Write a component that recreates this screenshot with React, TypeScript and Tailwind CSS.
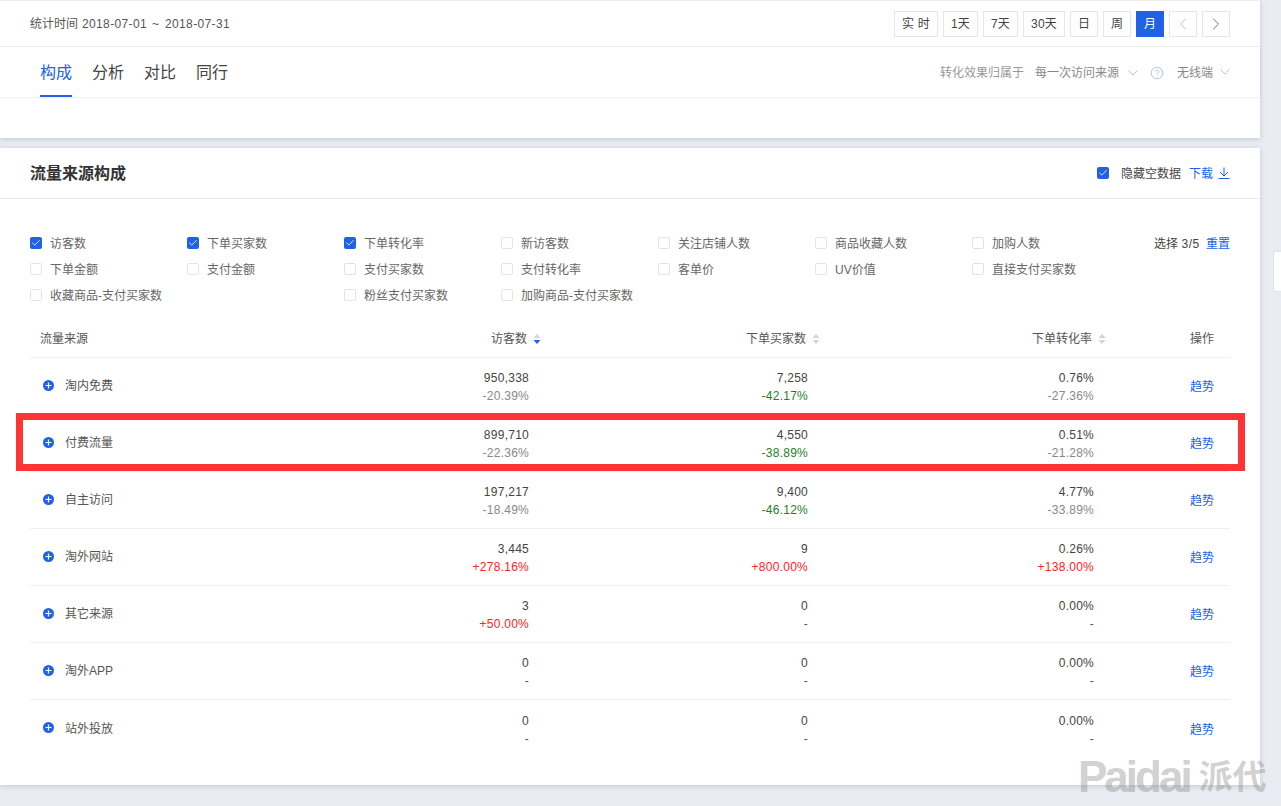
import { Check, ChevronLeft, ChevronRight, CircleHelp } from "lucide-react";

const ranges = [
  { label: "实 时", w: "w-[44px]" },
  { label: "1天", w: "w-[35px]" },
  { label: "7天", w: "w-[35px]" },
  { label: "30天", w: "w-[42px]" },
  { label: "日", w: "w-[28px]" },
  { label: "周", w: "w-[28px]" },
];

const metrics = [
  ["访客数", true],
  ["下单买家数", true],
  ["下单转化率", true],
  ["新访客数", false],
  ["关注店铺人数", false],
  ["商品收藏人数", false],
  ["加购人数", false],
  ["下单金额", false],
  ["支付金额", false],
  ["支付买家数", false],
  ["支付转化率", false],
  ["客单价", false],
  ["UV价值", false],
  ["直接支付买家数", false],
  ["收藏商品-支付买家数", false],
  null,
  ["粉丝支付买家数", false],
  ["加购商品-支付买家数", false],
] as const;

type Cell = [string, string];

const rows: { name: string; cells: Cell[] }[] = [
  { name: "淘内免费", cells: [["950,338", "-20.39%"], ["7,258", "-42.17%"], ["0.76%", "-27.36%"]] },
  { name: "付费流量", cells: [["899,710", "-22.36%"], ["4,550", "-38.89%"], ["0.51%", "-21.28%"]] },
  { name: "自主访问", cells: [["197,217", "-18.49%"], ["9,400", "-46.12%"], ["4.77%", "-33.89%"]] },
  { name: "淘外网站", cells: [["3,445", "+278.16%"], ["9", "+800.00%"], ["0.26%", "+138.00%"]] },
  { name: "其它来源", cells: [["3", "+50.00%"], ["0", "-"], ["0.00%", "-"]] },
  { name: "淘外APP", cells: [["0", "-"], ["0", "-"], ["0.00%", "-"]] },
  { name: "站外投放", cells: [["0", "-"], ["0", "-"], ["0.00%", "-"]] },
];

function deltaColor(value: string, col: number) {
  if (value.startsWith("+")) return "text-[#ff2222]";
  if (value === "-") return "text-[#555]";
  return col === 1 ? "text-[#1d7f2a]" : "text-[#888]";
}

function Checkbox({ checked }: { checked: boolean }) {
  return checked ? (
    <span className="grid h-3 w-3 shrink-0 place-items-center rounded-[2px] bg-[#2062e6] text-white">
      <Check className="h-[10px] w-[10px]" strokeWidth={2} />
    </span>
  ) : (
    <span className="h-3 w-3 shrink-0 rounded-[2px] border border-[#e4e4e4] bg-white" />
  );
}

function SortIcon({ active }: { active?: boolean }) {
  return (
    <svg width="8" height="12" viewBox="0 0 8 12" className="ml-[6px] -mr-3 shrink-0">
      <path d="M4 1 L7.5 5 H0.5 Z" fill="#ccd6e4" />
      <path d="M4 11 L7.5 7 H0.5 Z" fill={active ? "#2062e6" : "#ccd6e4"} />
    </svg>
  );
}

function PlusDot() {
  return (
    <svg width="11" height="11" viewBox="0 0 11 11" className="mb-[2px] shrink-0">
      <circle cx="5.5" cy="5.5" r="5.5" fill="#2062e6" />
      <path d="M2.5 5.5 H8.5 M5.5 2.5 V8.5" stroke="#fff" strokeWidth="1.2" />
    </svg>
  );
}

function Caret({ className }: { className: string }) {
  return (
    <svg width="10" height="6" viewBox="0 0 10 6" fill="none" stroke="#c4c4c4" className={className}>
      <path d="M0.5 0.5 L5 5 L9.5 0.5" />
    </svg>
  );
}

export default function App() {
  return (
    <div className="relative h-[806px] w-[1281px] overflow-hidden bg-[#e9ecf2] text-[12px] leading-[18px] text-[#444] [font-family:'Liberation_Sans','Noto_Sans_CJK_SC',sans-serif]">
      <div className="w-[1260px] bg-white shadow-[0_1px_5px_rgba(60,70,90,0.22)]">
        <div className="flex h-[47px] items-center justify-between border-t border-b border-t-[#eeeeee] border-b-[#ececec] pl-[30px] pr-[30px]">
          <span className="flex gap-[5px] text-[#555]">
            <span className="mr-[-1px]">统计时间</span>
            <span className="tracking-[0.36px]">2018-07-01</span>
            <span>~</span>
            <span className="ml-[1px] tracking-[0.36px]">2018-07-31</span>
          </span>
          <div className="flex gap-[5px]">
            {ranges.map((r) => (
              <span key={r.label} className={`grid h-[26px] place-items-center border border-[#e6e6e6] tracking-[0.2px] ${r.w}`}>
                {r.label}
              </span>
            ))}
            <span className="grid h-[26px] w-[28px] place-items-center bg-[#2062e6] text-white">月</span>
            <span className="grid h-[26px] w-[28px] place-items-center border border-[#e6e6e6] text-[#bbb]">
              <ChevronLeft className="h-5 w-5" strokeWidth={1.1} />
            </span>
            <span className="grid h-[26px] w-[28px] place-items-center border border-[#e6e6e6] text-[#666]">
              <ChevronRight className="h-5 w-5" strokeWidth={1.1} />
            </span>
          </div>
        </div>
        <div className="flex h-[50px] items-start justify-between pl-[40px] pr-[30px] shadow-[0_1px_2px_rgba(0,0,0,0.07)]">
          <div className="flex gap-5 text-[16px] leading-[24px]">
            <span className="h-[50px] border-b-2 border-[#2062e6] pt-[14px] text-[#2062e6]">构成</span>
            <span className="pt-[14px]">分析</span>
            <span className="pt-[14px]">对比</span>
            <span className="pt-[14px]">同行</span>
          </div>
          <div className="flex items-center pt-[17px] text-[#999]">
            <span>转化效果归属于</span>
            <span className="ml-[11px] text-[#888]">每一次访问来源</span>
            <Caret className="ml-[9px]" />
            <CircleHelp className="ml-[12px] h-[14px] w-[14px] text-[#b4c5db]" strokeWidth={1.7} />
            <span className="ml-[13px] text-[#888]">无线端</span>
            <Caret className="ml-[7px] -translate-y-px" />
          </div>
        </div>
        <div className="h-[41px]" />
      </div>

      <div className="mt-[10px] h-[637px] w-[1260px] bg-white shadow-[0_1px_5px_rgba(60,70,90,0.22)]">
        <div className="flex h-[51px] items-center justify-between border-b border-[#e8e8e8] px-[30px]">
          <h2 className="pt-[1px] text-[16px] font-bold text-[#333]">流量来源构成</h2>
          <div className="flex items-center">
            <Checkbox checked />
            <span className="ml-[12px] pt-[1px]">隐藏空数据</span>
            <span className="ml-2 pt-[1px] text-[#2062e6]">下载</span>
            <svg width="12" height="12" viewBox="0 0 12 12" fill="none" stroke="#2062e6" className="ml-[5px]">
              <path d="M6 0.5 V9 M2 5 L6 9 L10 5 M0.5 11.5 H11.5" />
            </svg>
          </div>
        </div>

        <div className="relative mx-[30px] mt-[31px]">
          <div className="grid grid-cols-[repeat(7,157px)]">
            {metrics.map((m, i) =>
              m ? (
                <label key={m[0]} className="flex h-[26px] items-center gap-2 text-[#666]">
                  <Checkbox checked={m[1]} />
                  <span className="pt-[1px]">{m[0]}</span>
                </label>
              ) : (
                <span key={i} />
              ),
            )}
          </div>
          <div className="absolute right-0 top-[5px]">
            选择 <span className="tracking-[0.5px]">3/5</span> <span className="ml-[3px] text-[#2062e6]">重置</span>
          </div>
        </div>

        <div className="mx-[30px] mt-[18px]">
          <div className="grid h-[32px] grid-cols-[200px_299px_279px_286px_136px] items-center border-b border-[#f0f0f0] pb-[6px] text-[#555]">
            <span className="pl-[10px]">流量来源</span>
            <span className="flex items-center justify-end">访客数<SortIcon active /></span>
            <span className="flex items-center justify-end">下单买家数<SortIcon /></span>
            <span className="flex items-center justify-end">下单转化率<SortIcon /></span>
            <span className="pr-4 text-right">操作</span>
          </div>
          {rows.map((row) => (
            <div key={row.name} className="grid h-[57px] grid-cols-[200px_299px_279px_286px_136px] items-center border-b border-[#f0f0f0] last:border-b-0">
              <div className="flex items-center pl-[13px]">
                <PlusDot />
                <span className="ml-[11px] text-[#555]">{row.name}</span>
              </div>
              {row.cells.map((cell, col) => (
                <div key={col} className="pt-[2px] text-right tracking-[0.25px]">
                  <div className="text-[#444]">{cell[0]}</div>
                  <div className={deltaColor(cell[1], col)}>{cell[1]}</div>
                </div>
              ))}
              <span className="pr-4 pt-[2px] text-right text-[#2062e6]">趋势</span>
            </div>
          ))}
        </div>
      </div>

      {/* red mark drawn on top of the screenshot */}
      <div className="absolute left-[16px] top-[413px] h-[58px] w-[1229px] border-[7px] border-[#ff3535]" />

      <div className="absolute right-0 top-[251px] h-[41px] w-[8px] border border-r-0 border-[#e4e4e4] bg-white" />

      <div className="absolute left-[1078px] top-[752px] flex items-center text-[#888]/40">
        <span className="text-[44px] font-bold leading-[50px] tracking-[-3px]">Paidai</span>
        <span className="ml-[9px] text-[34px] font-bold leading-[50px]">派代</span>
      </div>
    </div>
  );
}
